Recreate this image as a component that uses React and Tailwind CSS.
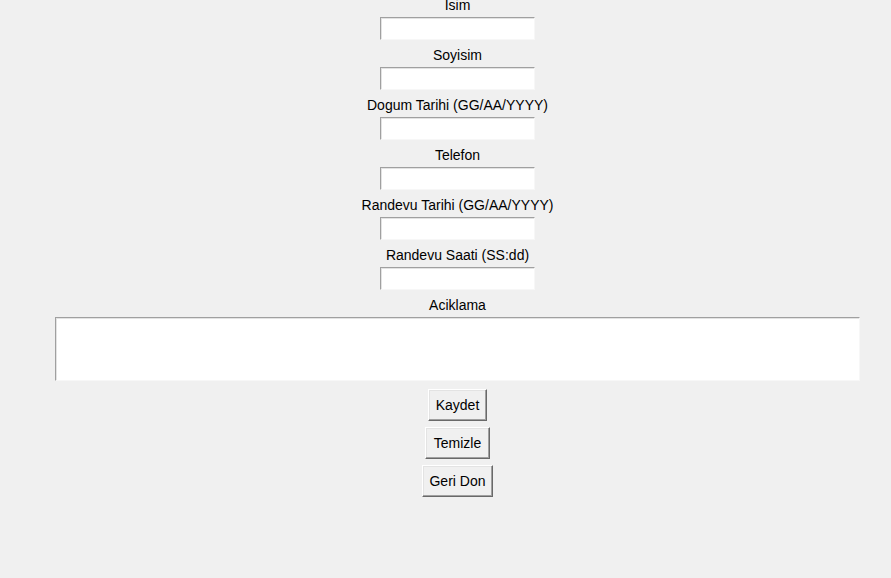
export default function App() {
  const fields = [
    "Isim",
    "Soyisim",
    "Dogum Tarihi (GG/AA/YYYY)",
    "Telefon",
    "Randevu Tarihi (GG/AA/YYYY)",
    "Randevu Saati (SS:dd)",
  ];
  const entry =
    "border-t border-l border-r border-b border-t-[#a0a0a0] border-l-[#a0a0a0] border-r-[#f7f7f7] border-b-[#f7f7f7] bg-white shadow-[inset_1px_1px_0_#e3e3e3]";
  const btn =
    "h-[32px] flex items-center justify-center bg-[#f0f0f0] border-t border-l border-r border-b border-t-white border-l-white border-r-[#696969] border-b-[#696969] shadow-[inset_-1px_-1px_0_#a0a0a0,inset_1px_1px_0_#e3e3e3] text-[14px] text-black";
  return (
    <div
      className="w-[891px] h-[578px] overflow-hidden bg-[#f0f0f0] flex flex-col items-center pl-[24px]"
      style={{ fontFamily: '"Liberation Sans", Arial, sans-serif' }}
    >
      <div className="flex flex-col items-center -mt-[10px]">
        {fields.map((f) => (
          <div key={f} className="flex flex-col items-center">
            <div className="h-[27px] flex items-center justify-center pt-[3px] text-[14px] text-black leading-none">
              {f}
            </div>
            <div className={`w-[155px] h-[23px] ${entry}`} />
          </div>
        ))}
        <div className="h-[27px] flex items-center justify-center pt-[3px] text-[14px] text-black leading-none">
          Aciklama
        </div>
        <div className={`w-[805px] h-[64px] ${entry}`} />
      </div>
      <div className="flex flex-col items-center gap-[6px] mt-[8px]">
        <div className={`w-[59px] ${btn}`}>Kaydet</div>
        <div className={`w-[65px] ${btn}`}>Temizle</div>
        <div className={`w-[71px] ${btn}`}>Geri Don</div>
      </div>
    </div>
  );
}
